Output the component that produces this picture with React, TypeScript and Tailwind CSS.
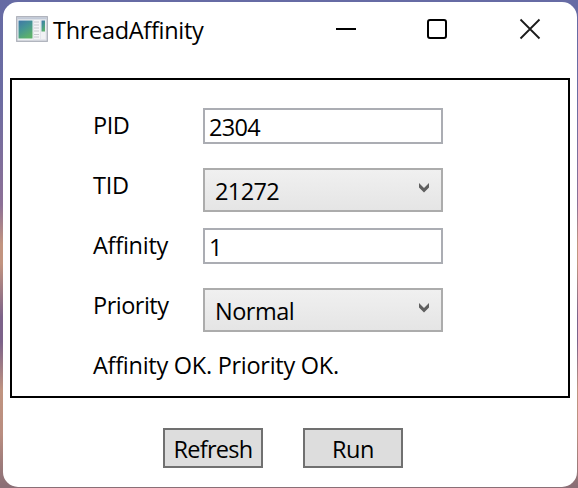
import type { ReactNode } from "react";

function AppIcon() {
  return (
    <svg className="mt-[14px] block" width="32" height="26" viewBox="0 0 32 26">
      <defs>
        <linearGradient id="screen" x1="0" y1="0" x2="0.5" y2="1">
          <stop offset="0" stopColor="#3f76a8" />
          <stop offset="0.5" stopColor="#459694" />
          <stop offset="1" stopColor="#5cb06c" />
        </linearGradient>
      </defs>
      <rect x="0.7" y="0.7" width="30.6" height="24.6" fill="#e4e6ec" stroke="#a9adb7" strokeWidth="1.2" />
      <rect x="1.5" y="1.2" width="29" height="2" fill="#c2cad8" />
      <rect x="2" y="4" width="15" height="19.5" fill="#f5f7f8" />
      <rect x="2.5" y="4.5" width="14" height="18" fill="url(#screen)" />
      <rect x="18" y="4" width="6" height="19" fill="#f4f5f7" />
      <path d="M18 6h5M18 9h5M18 12h5M18 15h5M18 18.5h5M18 21h5" stroke="#c6c9ce" strokeWidth="1" />
      <rect x="25" y="4" width="4.5" height="19" fill="#f1f2f4" />
      <rect x="25.5" y="4.5" width="3.5" height="11" fill="url(#screen)" />
    </svg>
  );
}

function Field({ label, tracking, children }: { label: string; tracking: string; children: ReactNode }) {
  return (
    <div className="flex h-[60px] items-start">
      <span className={`w-[110px] ${tracking}`}>{label}</span>
      {children}
    </div>
  );
}

function TextBox({ value }: { value: string }) {
  return (
    <div className="h-[36px] w-[240px] border-2 border-[#abadb3] bg-white pl-1">
      <span className="block tracking-[-0.7px]">{value}</span>
    </div>
  );
}

function Combo({ value, tracking }: { value: string; tracking: string }) {
  return (
    <div className="flex h-[44px] w-[240px] justify-between border-2 border-[#acacac] bg-linear-to-b from-[#f0f0f0] to-[#e5e5e5] pl-[10px] pr-[11px]">
      <span className={`block pt-[4px] ${tracking}`}>{value}</span>
      <svg className="mt-[13px]" width="12" height="10" viewBox="0 0 12 10">
        <path d="M1 0L6 5L11 0V4.5L6 9.5L1 4.5Z" fill="#606060" />
      </svg>
    </div>
  );
}

export default function App() {
  return (
    <div className="h-[488px] w-[578px] bg-[linear-gradient(to_bottom,#666ba4_0%,#6c6ca2_20%,#8d7096_42%,#c2947f_50%,#c2947f_54%,#7c628a_65%,#7c628a_70%,#c09480_80%,#b98d80_89%,#8a6f76_99.6%)] pl-[3px] pr-px pt-[2px] pb-px font-['Open_Sans','Noto_Sans',sans-serif] text-[23.5px] leading-[34px] whitespace-nowrap text-black">
      <div className="flex h-[485px] flex-col rounded-[15px] bg-white">
        <header className="flex h-[76px] items-start pl-[13px]">
          <AppIcon />
          <h1 className="ml-[5px] mt-[11px] w-[282px] tracking-[-0.3px]">ThreadAffinity</h1>
          <svg className="mt-[16px]" width="206" height="22" viewBox="0 0 206 22">
            <path d="M1 11h20" stroke="#000" strokeWidth="2" />
            <rect x="93" y="2" width="18" height="18" rx="2" fill="none" stroke="#000" strokeWidth="2" />
            <path d="M185.5 1.5l19 19M204.5 1.5l-19 19" stroke="#1a1a1a" strokeWidth="1.8" />
          </svg>
        </header>
        <main className="ml-[7px] h-[320px] w-[560px] border-2 border-black pl-[81px] pt-[28px]">
          <Field label="PID" tracking="tracking-[-0.5px]"><TextBox value="2304" /></Field>
          <Field label="TID" tracking="tracking-[-0.3px]"><Combo value="21272" tracking="tracking-[-0.6px]" /></Field>
          <Field label="Affinity" tracking="tracking-[-0.25px]"><TextBox value="1" /></Field>
          <Field label="Priority" tracking="tracking-[-0.5px]"><Combo value="Normal" tracking="tracking-[-0.5px]" /></Field>
          <p className="tracking-[-0.27px]">Affinity OK. Priority OK.</p>
        </main>
        <footer className="mt-[30px] flex gap-10 pl-[160px]">
          <button className="h-[40px] w-[100px] border-2 border-[#707070] bg-[#dddddd] pt-[3px] leading-[33px] tracking-[-0.7px]">Refresh</button>
          <button className="h-[40px] w-[100px] border-2 border-[#707070] bg-[#dddddd] pt-[3px] leading-[33px] tracking-[-0.5px]">Run</button>
        </footer>
      </div>
    </div>
  );
}
